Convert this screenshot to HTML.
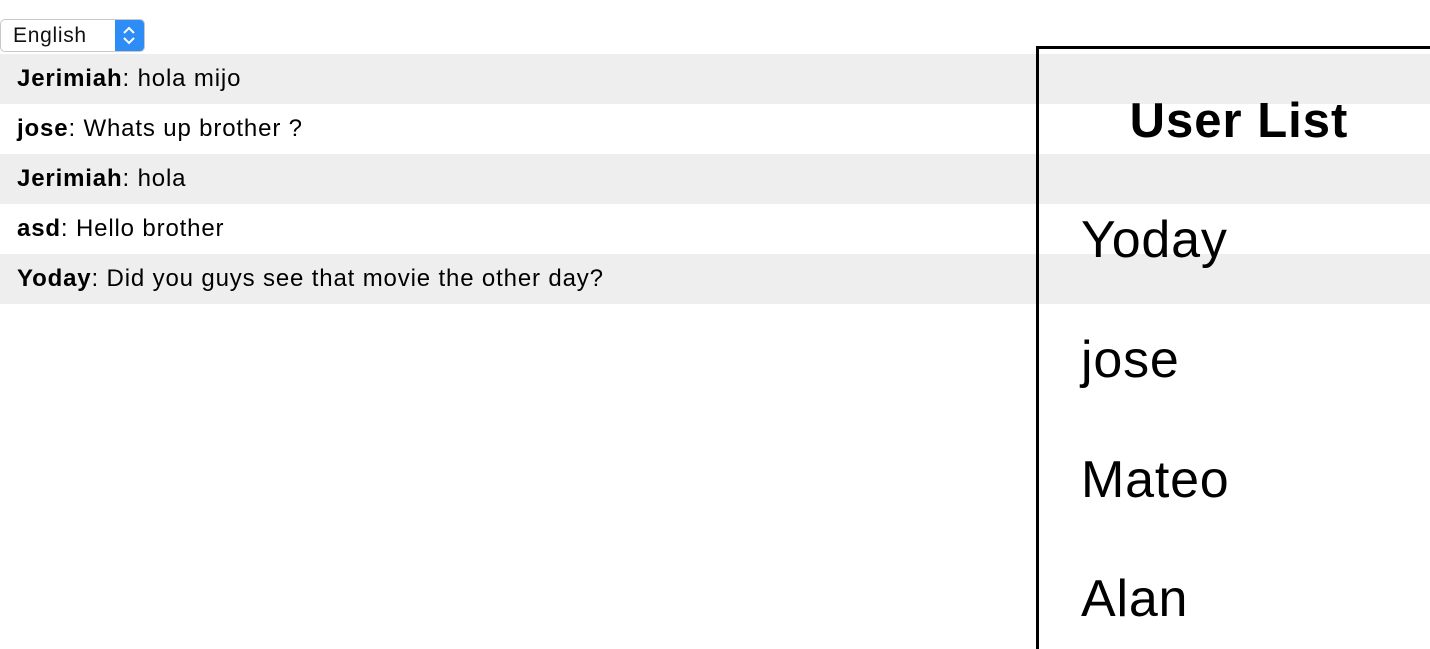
<!DOCTYPE html>
<html><head><style>
body{margin:0;width:1430px;height:626px;overflow:hidden;background:#fff;font-family:"Liberation Sans",Arial,sans-serif;position:relative}
.sel{position:absolute;left:0;top:19px;width:145px;height:33px;border:1px solid #c8c8c8;border-radius:5px;box-sizing:border-box;background:#fff;overflow:hidden}
.sel span{position:absolute;left:12px;top:4px;font-size:21px;letter-spacing:0.7px;color:#111}
.sel .b{position:absolute;right:0;top:0;width:29px;height:100%;background:#2d8cf6}
.rows{position:absolute;left:0;top:54px;width:1430px}
.r{height:50px;line-height:50px;font-size:24px;letter-spacing:0.85px;padding-left:17px;color:#000}
.r:nth-child(odd){background:#eee}
.panel{position:absolute;left:1036px;top:46px;width:400px;height:600px;border-left:3px solid #000;border-top:3px solid #000}
.panel h1{margin:0;position:absolute;left:0;width:400px;text-align:center;top:42px;font-size:49px;letter-spacing:1px;font-weight:bold;line-height:60px}
.u{position:absolute;left:42px;font-size:52px;letter-spacing:0.8px;line-height:60px}
</style></head><body>
<div class="sel"><span>English</span><div class="b"><svg width="29" height="31" viewBox="0 0 29 31"><path d="M9 13l5-5 5 5M9 18l5 5 5-5" stroke="#fff" stroke-width="2" fill="none"/></svg></div></div>
<div class="rows">
<div class="r"><b>Jerimiah</b>: hola mijo</div>
<div class="r"><b>jose</b>: Whats up brother ?</div>
<div class="r"><b>Jerimiah</b>: hola</div>
<div class="r"><b>asd</b>: Hello brother</div>
<div class="r"><b>Yoday</b>: Did you guys see that movie the other day?</div>
</div>
<div class="panel">
<h1>User List</h1>
<div class="u" style="top:161px">Yoday</div>
<div class="u" style="top:281px">jose</div>
<div class="u" style="top:401px">Mateo</div>
<div class="u" style="top:520px">Alan</div>
</div>
</body></html>
